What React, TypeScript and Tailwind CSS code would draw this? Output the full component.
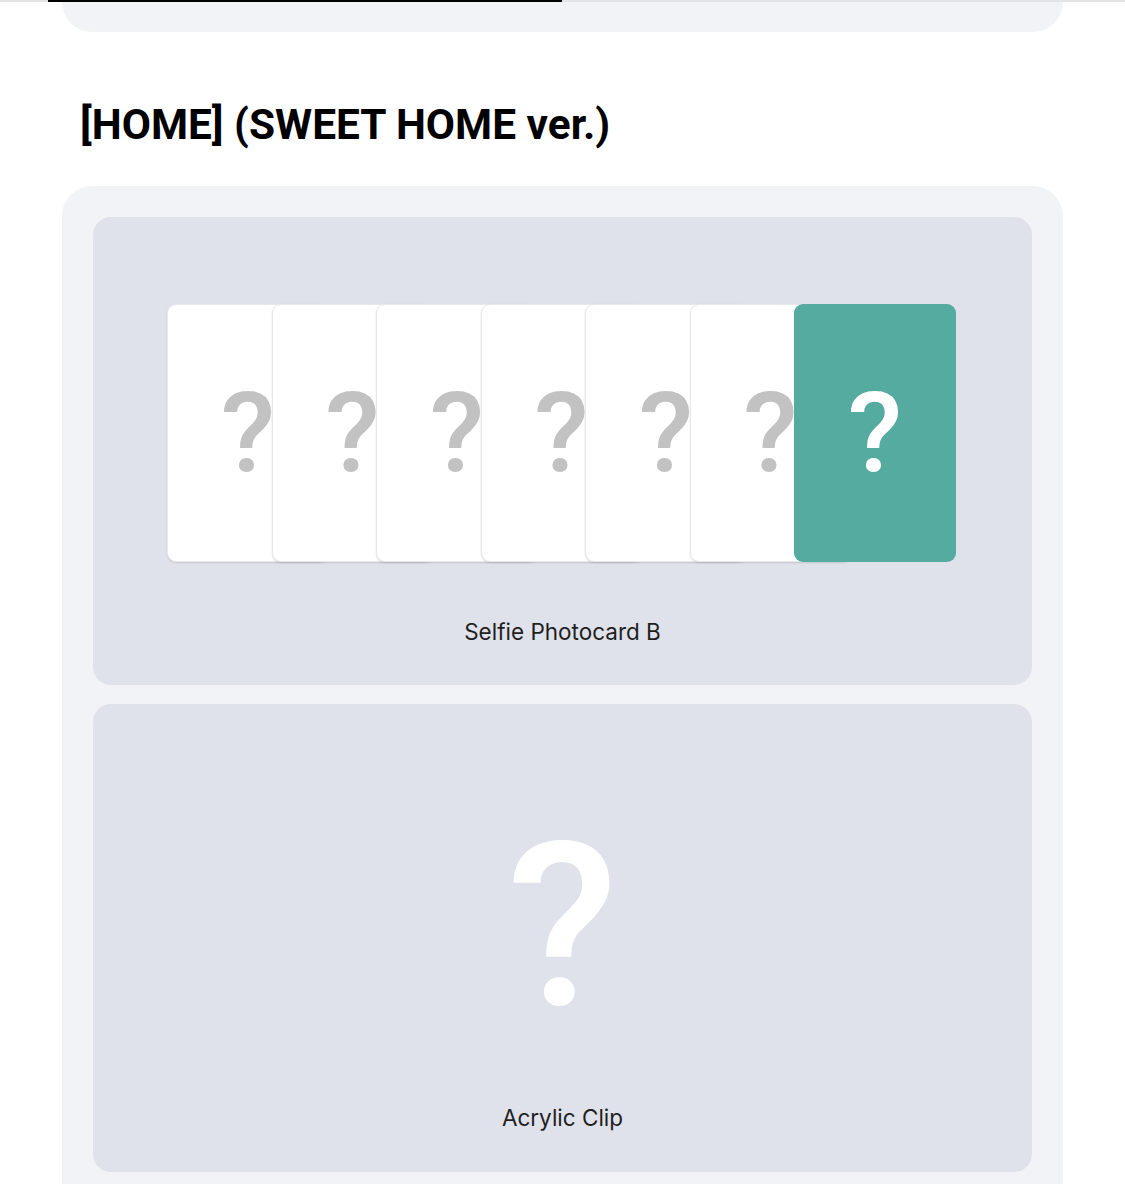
import React from 'react';

const CARD_COUNT = 7;

const PhotocardStack: React.FC = () => (
  <div className="flex h-[258px] -translate-x-[1px]">
    {Array.from({ length: CARD_COUNT }).map((_, i) => {
      const last = i === CARD_COUNT - 1;
      return (
        <div
          key={i}
          className={`flex h-full w-[162px] shrink-0 items-center justify-center rounded-[9px] ${
            i > 0 ? '-ml-[57.5px]' : ''
          } ${
            last
              ? 'bg-[#55aba0] text-white'
              : 'border border-[#e7e8eb] bg-white text-[#c2c2c2] shadow-[0_1px_2px_rgba(0,0,0,0.12)]'
          }`}
        >
          <span className="font-['Roboto'] text-[112px] font-medium leading-none">?</span>
        </div>
      );
    })}
  </div>
);

export default function App() {
  return (
    <div className="min-h-screen bg-white font-['Inter',sans-serif] text-[#1f1f1f]">
      {/* progress bar + tail of previous card */}
      <div className="flex h-[2px] bg-[#e4e4e6]">
        <div className="ml-[48px] w-[514px] bg-black" />
      </div>
      <div className="mx-[62px] h-[30px] rounded-b-[30px] bg-[#f2f3f6]" />

      <h2 className="ml-[80px] mt-[72px] font-['Roboto',sans-serif] text-[42.4px] font-bold leading-none text-black">
        [HOME] (SWEET HOME ver.)
      </h2>

      <div className="mx-[62px] mt-[40px] flex flex-col gap-[19px] rounded-t-[30px] bg-[#f2f3f6] px-[31px] pb-[40px] pt-[31px]">
        <div className="flex flex-col items-center rounded-[18px] bg-[#dfe2ea] pb-[38px] pt-[87px]">
          <PhotocardStack />
          <p className="mt-[55px] text-[22.5px] leading-[30px] text-[#1f1f1f]">Selfie Photocard B</p>
        </div>

        <div className="flex flex-col items-center rounded-[18px] bg-[#dfe2ea] pb-[39px] pt-[109px]">
          <span className="font-['Roboto'] text-[228px] font-medium leading-none text-white">?</span>
          <p className="mt-[62px] text-[22.5px] leading-[30px] text-[#1f1f1f]">Acrylic Clip</p>
        </div>
      </div>
    </div>
  );
}
